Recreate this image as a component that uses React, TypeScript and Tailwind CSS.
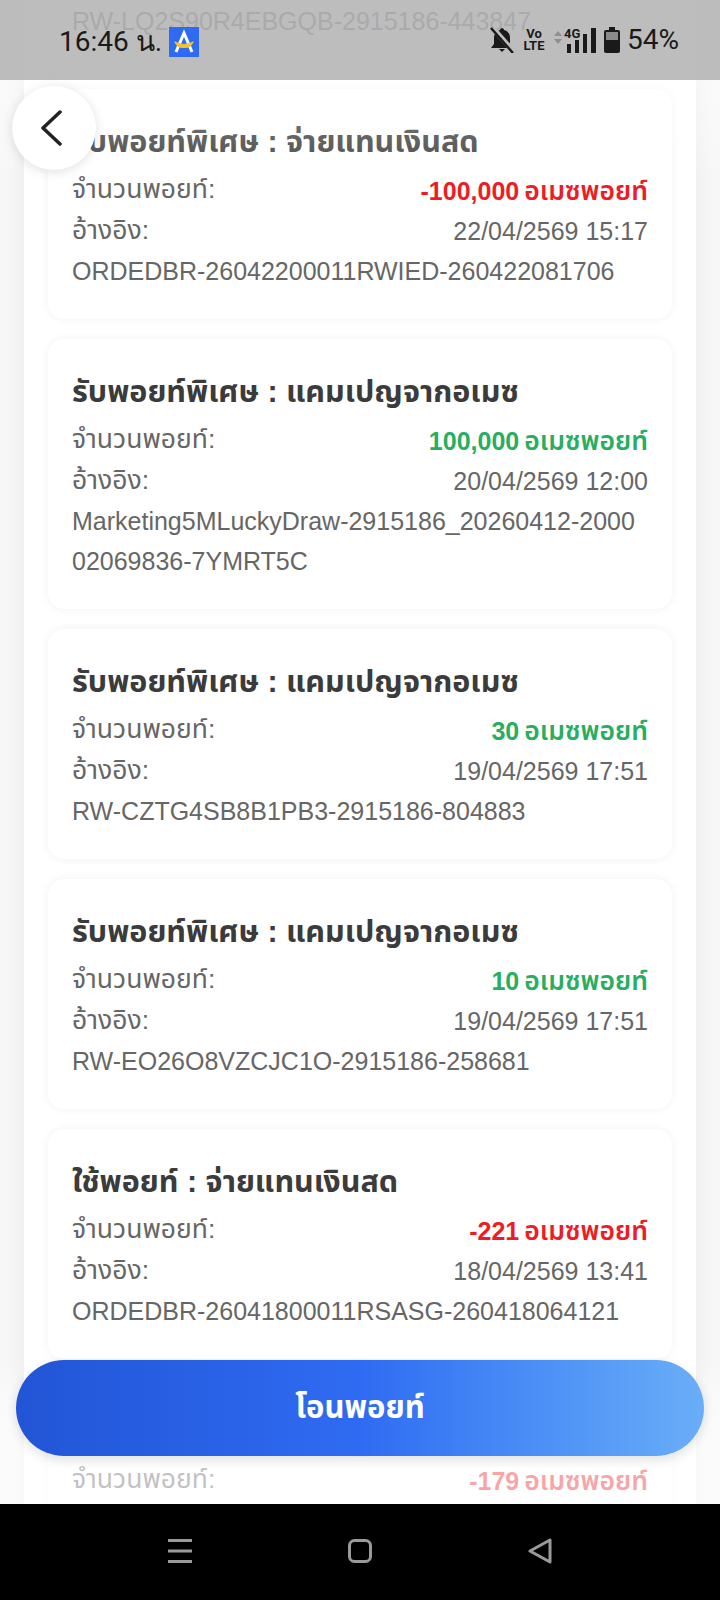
const LATIN = "font-['Liberation_Sans','Noto_Sans_Thai','Noto_Sans',sans-serif]";

type Item = {
  title: string;
  amount: string;
  unit: string;
  negative: boolean;
  date?: string;
  refs: string[];
};

const items: Item[] = [
  { title: "รับพอยท์พิเศษ : จ่ายแทนเงินสด", amount: "-100,000", unit: "อเมซพอยท์", negative: true, date: "22/04/2569 15:17", refs: ["ORDEDBR-26042200011RWIED-260422081706"] },
  { title: "รับพอยท์พิเศษ : แคมเปญจากอเมซ", amount: "100,000", unit: "อเมซพอยท์", negative: false, date: "20/04/2569 12:00", refs: ["Marketing5MLuckyDraw-2915186_20260412-2000", "02069836-7YMRT5C"] },
  { title: "รับพอยท์พิเศษ : แคมเปญจากอเมซ", amount: "30", unit: "อเมซพอยท์", negative: false, date: "19/04/2569 17:51", refs: ["RW-CZTG4SB8B1PB3-2915186-804883"] },
  { title: "รับพอยท์พิเศษ : แคมเปญจากอเมซ", amount: "10", unit: "อเมซพอยท์", negative: false, date: "19/04/2569 17:51", refs: ["RW-EO26O8VZCJC1O-2915186-258681"] },
  { title: "ใช้พอยท์ : จ่ายแทนเงินสด", amount: "-221", unit: "อเมซพอยท์", negative: true, date: "18/04/2569 13:41", refs: ["ORDEDBR-26041800011RSASG-260418064121"] },
  { title: "ใช้พอยท์ : จ่ายแทนเงินสด", amount: "-179", unit: "อเมซพอยท์", negative: true, refs: [] },
];

function Card({ item }: { item: Item }) {
  return (
    <div className="rounded-[16px] bg-white px-6 pt-[32px] pb-[28px] shadow-[0_0_10px_rgba(0,0,0,0.06)]">
      <div className="h-[40px] text-[30.5px] leading-[40px] font-bold text-[#3b3b3b]">{item.title}</div>
      <div className="mt-[8px] flex h-[41px] items-center justify-between text-[25px] leading-[41px]">
        <span className="-mt-[1px] text-[26.5px] text-[#666666]">จำนวนพอยท์:</span>
        <span className={item.negative ? "mt-[3px] font-bold text-[#ee1c25]" : "mt-[3px] font-bold text-[#27ae60]"}>
          {item.amount} <span className="-ml-[2px] text-[26.5px] font-semibold">{item.unit}</span>
        </span>
      </div>
      {item.date && (
        <div className="flex h-[41px] items-center justify-between text-[25px] leading-[41px] text-[#666666]">
          <span className="-mt-[1px] text-[26.5px]">อ้างอิง:</span>
          <span className="mt-[2px]">{item.date}</span>
        </div>
      )}
      {item.refs.map((r) => (
        <div key={r} className="h-[40px] text-[25px] leading-[40px] text-[#666666]">{r}</div>
      ))}
    </div>
  );
}

function StatusBar() {
  return (
    <div className="absolute inset-x-0 top-0 flex h-[80px] items-center justify-between bg-[rgba(180,180,180,0.876)] pr-[41px] pl-[59px] text-[#1a1a1a]">
      <div className="mt-[4px] flex items-center">
        <span className="font-['Roboto',sans-serif] text-[28px] leading-none">16:46 น.</span>
        <svg className="ml-[7px]" width="30" height="30" viewBox="0 0 30 30">
          <rect width="30" height="30" fill="#2f6bf2" />
          <path d="M7 25 L15 6 L23 25" fill="none" stroke="#fff" strokeWidth="3" />
          <path d="M5 14 Q15 20 25 14 Q22 22 15 21 Q8 22 5 14Z" fill="#f5c22b" />
        </svg>
      </div>
      <div className="flex items-center">
        <svg width="26" height="26" viewBox="0 0 26 26">
          <path d="M13 1c1 0 2 1 2 2 4 1 6 4 6 8v6l3 4H2l3-4v-6c0-4 2-7 6-8 0-1 1-2 2-2z" fill="#1a1a1a" />
          <path d="M10 22h6l-3 3z" fill="#1a1a1a" />
          <path d="M4 1 L25 25" stroke="#bdbdbd" strokeWidth="5" />
          <path d="M2 1 L24 26" stroke="#1a1a1a" strokeWidth="2.5" />
        </svg>
        <div className="ml-[10px] flex w-[18px] flex-col items-center font-['Roboto',sans-serif] text-[13px] leading-[12px] font-bold">
          <span>Vo</span>
          <span>LTE</span>
        </div>
        <svg className="ml-[10px]" width="46" height="26" viewBox="0 0 46 26">
          <path d="M1 9 L5 4 L9 9Z M1 12 L5 17 L9 12Z" fill="#8f8f8f" />
          <text x="11" y="11" fontSize="13" fontWeight="700" fill="#1a1a1a" fontFamily="Roboto, sans-serif">4G</text>
          <rect x="14" y="17" width="4" height="9" fill="#1a1a1a" />
          <rect x="22" y="13" width="4" height="13" fill="#1a1a1a" />
          <rect x="30" y="7" width="4" height="19" fill="#1a1a1a" />
          <rect x="38" y="1" width="5" height="25" fill="#1a1a1a" />
        </svg>
        <svg className="ml-[5px]" width="16" height="26" viewBox="0 0 16 26">
          <path d="M5 0h6v3h3a2 2 0 0 1 2 2v19a2 2 0 0 1-2 2H2a2 2 0 0 1-2-2V5a2 2 0 0 1 2-2h3z" fill="#1a1a1a" />
          <rect x="2" y="5" width="12" height="8" fill="#8a8a8a" />
        </svg>
        <span className="ml-[7px] font-['Roboto',sans-serif] text-[28px] leading-none">54%</span>
      </div>
    </div>
  );
}

function NavBar() {
  return (
    <div className="absolute inset-x-0 bottom-0 flex h-[96px] items-center justify-center bg-black pb-[2px]">
      <div className="flex w-[384px] items-center justify-between">
        <svg width="24" height="24" viewBox="0 0 24 24">
          <path d="M0 1.5H24M0 12H24M0 22.5H24" stroke="#9a9a9a" strokeWidth="3" />
        </svg>
        <svg width="24" height="24" viewBox="0 0 24 24">
          <rect x="1.5" y="1.5" width="21" height="21" rx="5" fill="none" stroke="#9a9a9a" strokeWidth="3" />
        </svg>
        <svg width="24" height="26" viewBox="0 0 24 26">
          <path d="M22 2 V24 L2 13Z" fill="none" stroke="#9a9a9a" strokeWidth="3" strokeLinejoin="round" />
        </svg>
      </div>
    </div>
  );
}

export default function App() {
  return (
    <div className={`relative h-[1600px] w-[720px] overflow-hidden bg-[#f7f7f7] ${LATIN}`}>
      <div className="mx-6 h-full bg-white px-6 shadow-[0_0_20px_rgba(0,0,0,0.06)]">
        <div className="-mt-[20px] flex flex-col gap-[20px]">
          <div className="rounded-[16px] bg-white px-6 pt-[21px] pb-[28px] shadow-[0_0_10px_rgba(0,0,0,0.06)]">
            <div className="text-[25px] leading-[40px] text-[#666666]">RW-LQ2S90R4EBGQB-2915186-443847</div>
          </div>
          {items.map((it, i) => (
            <Card key={i} item={it} />
          ))}
        </div>
      </div>

      <StatusBar />

      <div className="absolute inset-x-0 top-[80px] h-[90px] bg-gradient-to-b from-white/40 to-white/10" />

      <button className="absolute top-[86px] left-[12px] flex h-[84px] w-[84px] items-center justify-center rounded-full bg-white shadow-[0_2px_12px_rgba(0,0,0,0.12)]">
        <svg width="24" height="36" viewBox="0 0 24 36" className="mr-[6px]">
          <path d="M21 2 L4 18 L21 34" fill="none" stroke="#222222" strokeWidth="3.5" strokeLinecap="round" strokeLinejoin="round" />
        </svg>
      </button>

      <div className="absolute inset-x-0 top-[1360px] h-[144px] bg-gradient-to-b from-transparent via-white/60 to-white/60" />

      <button className="absolute top-[1360px] left-[16px] flex h-[96px] w-[688px] items-center justify-center rounded-[48px] bg-gradient-to-r from-[#2255d6] via-[#2f6bf2] to-[#6aaef8] text-[31px] font-bold text-white shadow-[0_4px_12px_rgba(0,0,0,0.12)]">
        โอนพอยท์
      </button>

      <NavBar />
    </div>
  );
}
